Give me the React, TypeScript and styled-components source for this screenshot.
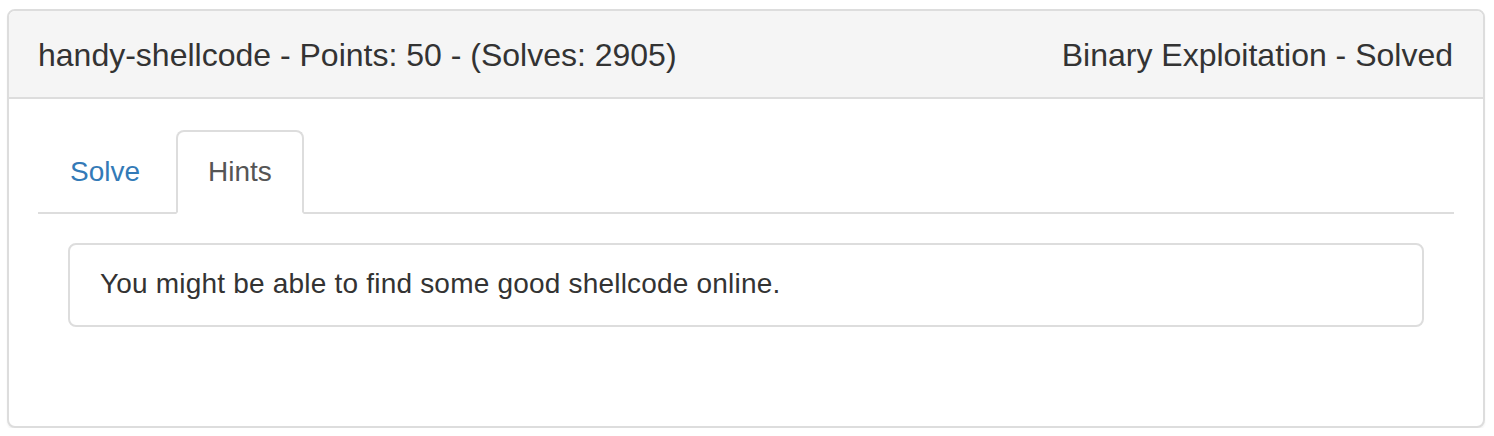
import React from "react";
import styled, { createGlobalStyle } from "styled-components";

const Global = createGlobalStyle`
  html, body { margin: 0; padding: 0; background: #fff; }
  body { font-family: "Liberation Sans", Arial, Helvetica, sans-serif; color: #333; }
`;

const Page = styled.div`
  padding: 9px 9px 0 7px;
`;

const Panel = styled.section`
  border: 2px solid #ddd;
  border-radius: 8px;
  background: #fff;
  box-shadow: 0 2px 2px rgba(0, 0, 0, 0.05);
  overflow: hidden;
`;

const Header = styled.header`
  display: flex;
  align-items: center;
  justify-content: space-between;
  height: 88px;
  padding: 2px 30px 0 29px;
  box-sizing: border-box;
  background: #f5f5f5;
  border-bottom: 2px solid #ddd;
  font-size: 32px;
  line-height: 40px;
  color: #333;
`;

const Body = styled.div`
  padding: 31px 29px 99px 29px;
`;

const Tabs = styled.ul`
  display: flex;
  list-style: none;
  margin: 0;
  padding: 0;
  border-bottom: 2px solid #ddd;
`;

const Tab = styled.li<{ $active?: boolean }>`
  margin-right: 4px;
  margin-bottom: -2px;
  padding: 20px 30px;
  font-size: 28px;
  line-height: 40px;
  border: 2px solid ${(p) => (p.$active ? "#ddd" : "transparent")};
  border-bottom-color: ${(p) => (p.$active ? "#fff" : "transparent")};
  border-radius: 8px 8px 0 0;
  background: ${(p) => (p.$active ? "#fff" : "transparent")};
  color: ${(p) => (p.$active ? "#555" : "#337ab7")};
  cursor: pointer;
`;

const Hint = styled.div`
  margin: 29px 30px 0 30px;
  padding: 19px 30px 21px;
  border: 2px solid #ddd;
  border-radius: 8px;
  font-size: 28px;
  letter-spacing: 0.2px;
  line-height: 40px;
  color: #333;
`;

export default function App() {
  return (
    <Page>
      <Global />
      <Panel>
        <Header>
          <span>handy-shellcode - Points: 50 - (Solves: 2905)</span>
          <span>Binary Exploitation - Solved</span>
        </Header>
        <Body>
          <Tabs>
            <Tab>Solve</Tab>
            <Tab $active>Hints</Tab>
          </Tabs>
          <Hint>You might be able to find some good shellcode online.</Hint>
        </Body>
      </Panel>
    </Page>
  );
}
